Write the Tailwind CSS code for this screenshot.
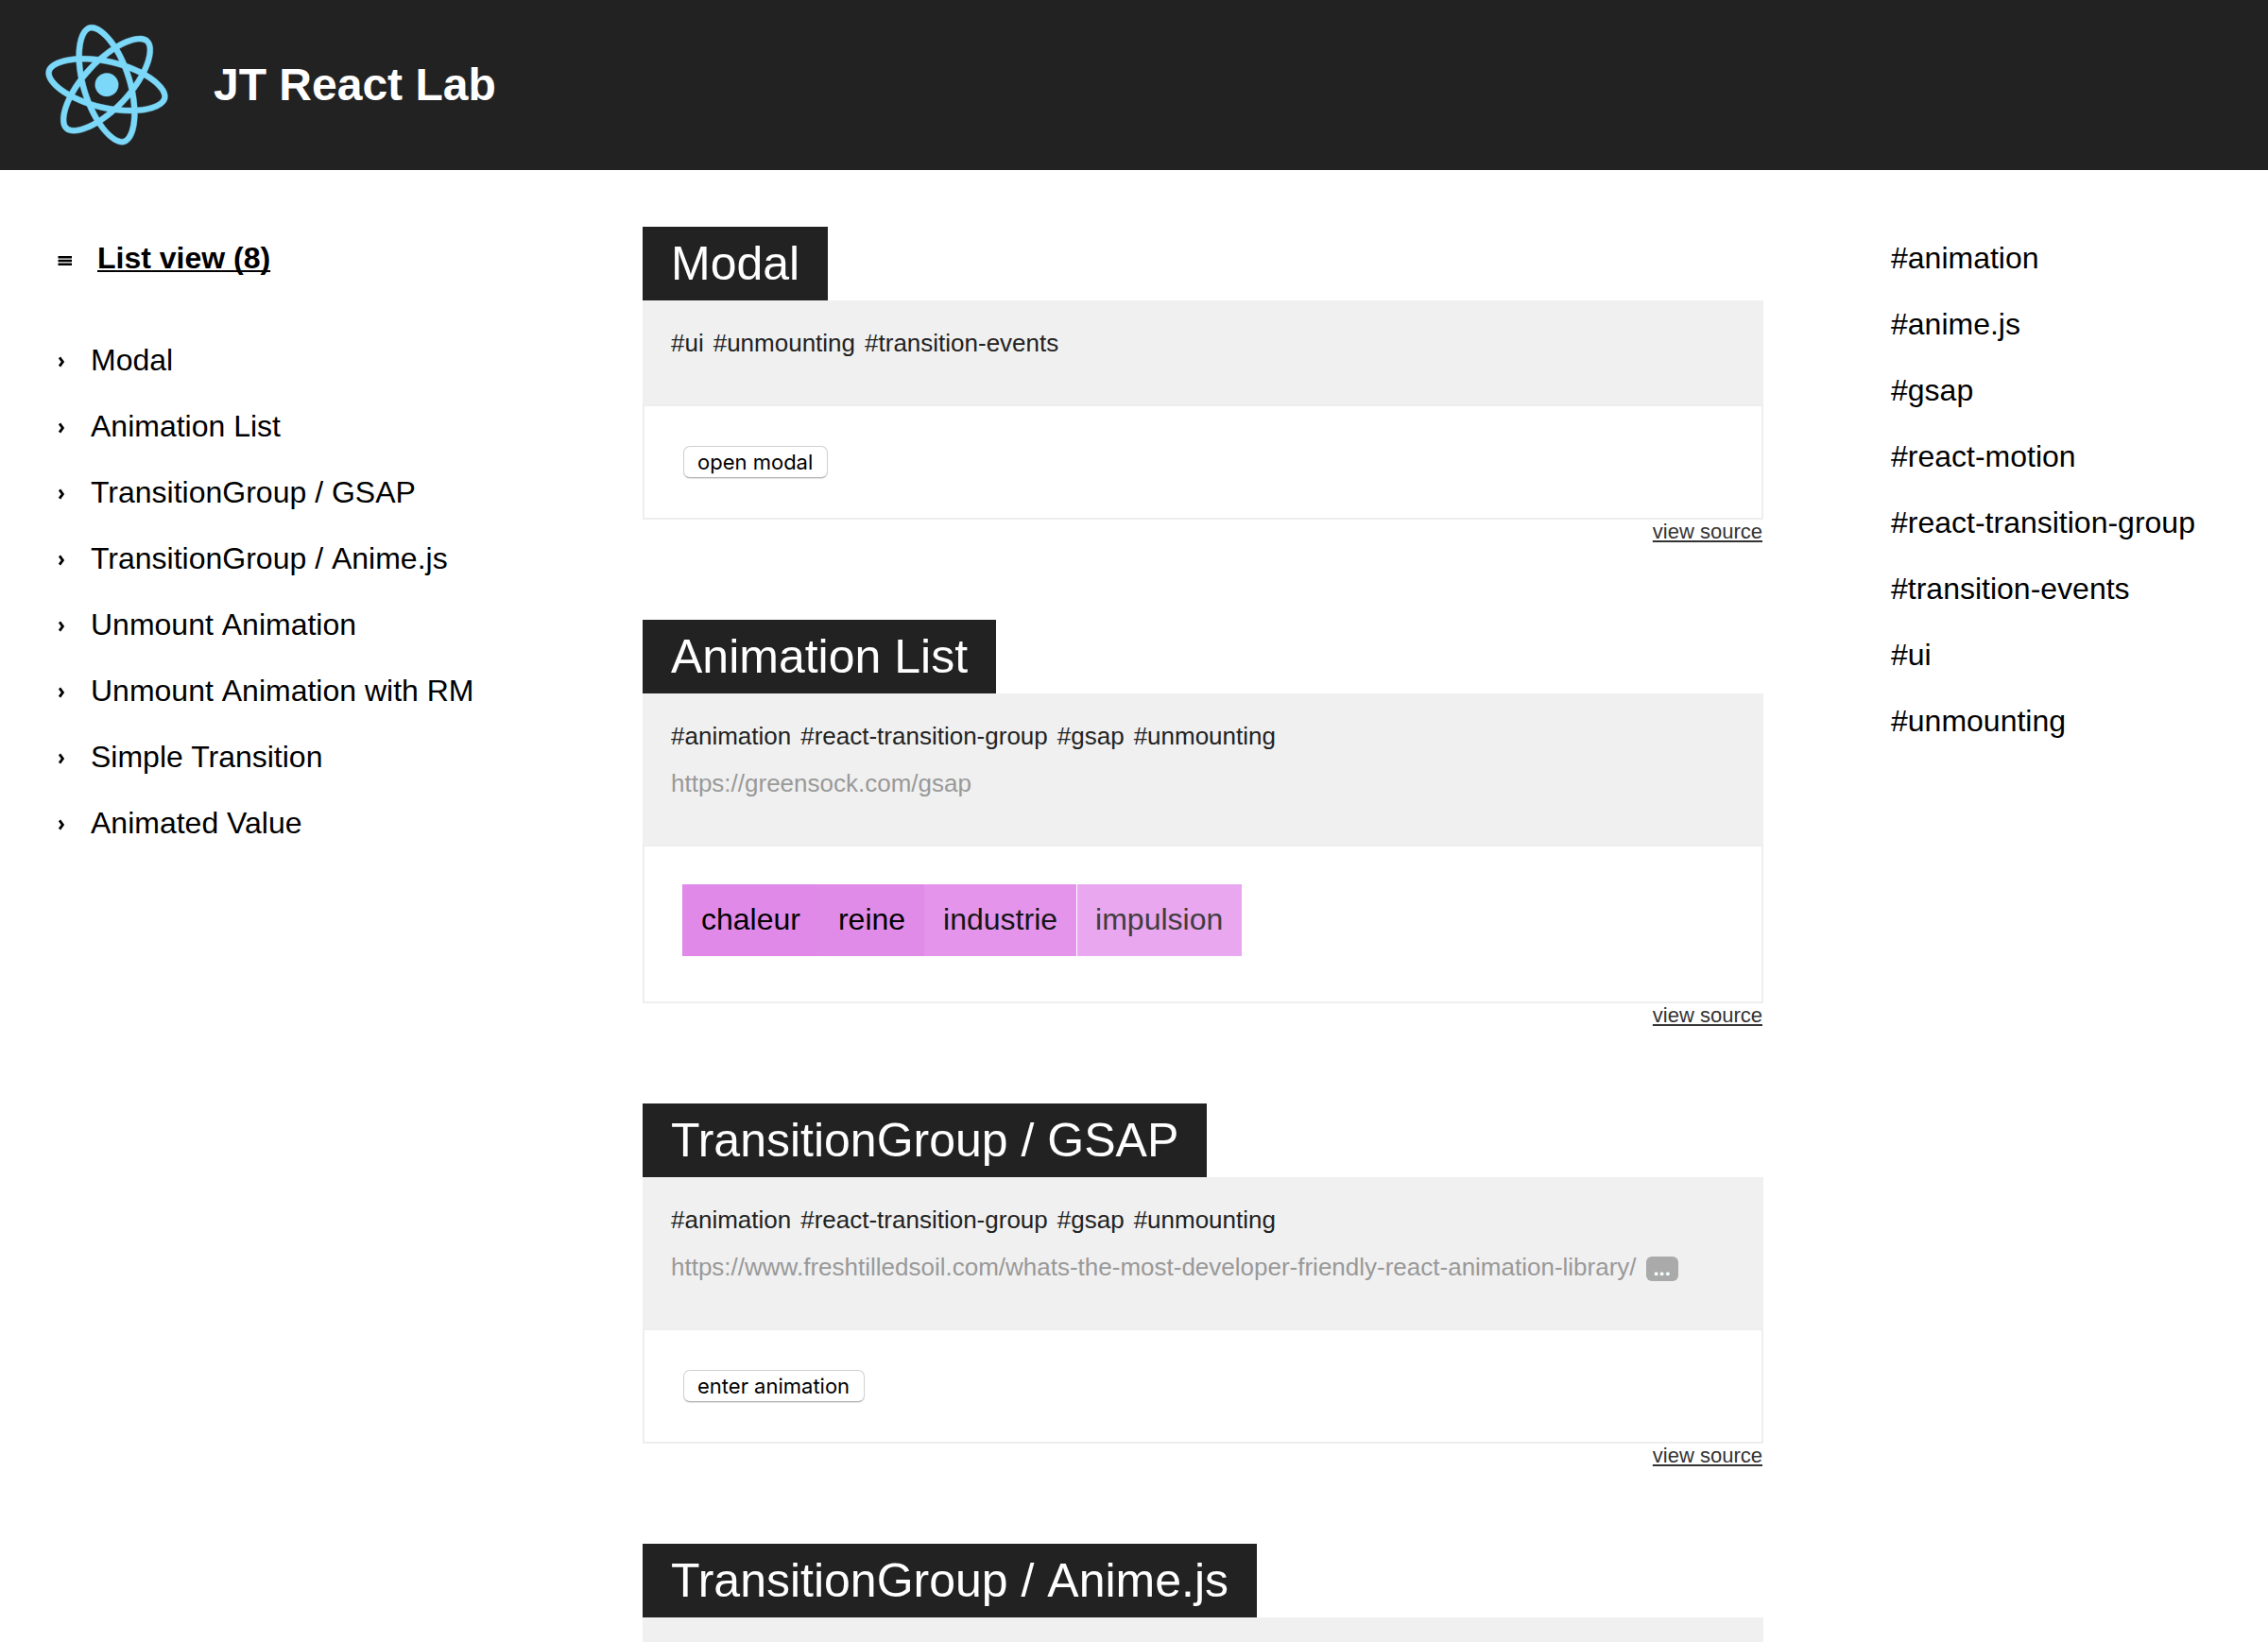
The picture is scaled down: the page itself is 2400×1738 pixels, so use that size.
<!DOCTYPE html>
<html lang="en">
<head>
<meta charset="utf-8">
<title>JT React Lab</title>
<script src="https://cdn.jsdelivr.net/npm/@tailwindcss/browser@4"></script>
</head>
<body class="bg-white text-black font-['Liberation_Sans',Arial,sans-serif] text-[32px] leading-[70px] h-[1738px] overflow-hidden">
<header class="h-[180px] bg-[#222] flex items-center">
  <svg class="w-[226px] h-[160px] shrink-0 text-[#7cd8f9]" viewBox="0 0 841.9 595.3" fill="currentColor" stroke="currentColor" stroke-width="1.6">
    <g transform="rotate(13 420.9 296.5)">
      <path d="M666.3 296.5c0-32.5-40.7-63.3-103.1-82.4 14.4-63.6 8-114.2-20.2-130.4-6.5-3.8-14.1-5.6-22.4-5.6v22.3c4.6 0 8.3.9 11.4 2.6 13.6 7.8 19.5 37.5 14.9 75.7-1.1 9.4-2.9 19.3-5.1 29.4-19.6-4.8-41-8.5-63.5-10.9-13.5-18.5-27.5-35.3-41.6-50 32.6-30.3 63.2-46.9 84-46.9V78c-27.5 0-63.5 19.6-99.9 53.6-36.4-33.8-72.4-53.2-99.9-53.2v22.3c20.7 0 51.4 16.5 84 46.6-14 14.7-28 31.4-41.3 49.9-22.6 2.4-44 6.1-63.6 11-2.3-10-4-19.7-5.2-29-4.7-38.2 1.1-67.9 14.6-75.8 3-1.8 6.9-2.6 11.5-2.6V78.5c-8.4 0-16 1.8-22.6 5.6-28.1 16.2-34.4 66.7-19.9 130.1-62.2 19.2-102.7 49.9-102.7 82.3 0 32.5 40.7 63.3 103.1 82.4-14.4 63.6-8 114.2 20.2 130.4 6.5 3.8 14.1 5.6 22.5 5.6 27.5 0 63.5-19.6 99.9-53.6 36.4 33.8 72.4 53.2 99.9 53.2 8.4 0 16-1.8 22.6-5.6 28.1-16.2 34.4-66.7 19.9-130.1 62-19.1 102.5-49.9 102.5-82.3zm-130.2-66.7c-3.7 12.9-8.3 26.2-13.5 39.5-4.1-8-8.4-16-13.1-24-4.6-8-9.5-15.8-14.4-23.4 14.2 2.1 27.9 4.7 41 7.9zm-45.8 106.5c-7.8 13.5-15.8 26.3-24.1 38.2-14.9 1.3-30 2-45.2 2-15.1 0-30.2-.7-45-1.9-8.3-11.9-16.4-24.6-24.2-38-7.6-13.1-14.5-26.4-20.8-39.8 6.2-13.4 13.2-26.8 20.7-39.9 7.8-13.5 15.8-26.3 24.1-38.2 14.9-1.3 30-2 45.2-2 15.1 0 30.2.7 45 1.9 8.3 11.9 16.4 24.6 24.2 38 7.6 13.1 14.5 26.4 20.8 39.8-6.3 13.4-13.2 26.8-20.7 39.9zm32.3-13c5.4 13.4 10 26.8 13.8 39.8-13.1 3.2-26.9 5.9-41.2 8 4.9-7.7 9.8-15.6 14.4-23.7 4.6-8 8.9-16.1 13-24.1zM421.2 430c-9.3-9.6-18.6-20.3-27.8-32 9 .4 18.2.7 27.5.7 9.4 0 18.7-.2 27.8-.7-9 11.7-18.3 22.4-27.5 32zm-74.4-58.9c-14.2-2.1-27.9-4.7-41-7.9 3.7-12.9 8.3-26.2 13.5-39.5 4.1 8 8.4 16 13.1 24 4.7 8 9.5 15.8 14.4 23.4zM420.7 163c9.3 9.6 18.6 20.3 27.8 32-9-.4-18.2-.7-27.5-.7-9.4 0-18.7.2-27.8.7 9-11.7 18.3-22.4 27.5-32zm-74 58.9c-4.9 7.7-9.8 15.6-14.4 23.7-4.6 8-8.9 16-13 24-5.4-13.4-10-26.8-13.8-39.8 13.1-3.1 26.9-5.8 41.2-7.9zm-90.5 125.2c-35.4-15.1-58.3-34.9-58.3-50.6 0-15.7 22.9-35.6 58.3-50.6 8.6-3.7 18-7 27.7-10.1 5.7 19.6 13.2 40 22.5 60.9-9.2 20.8-16.6 41.1-22.2 60.6-9.9-3.1-19.3-6.5-28-10.2zM310 490c-13.6-7.8-19.5-37.5-14.9-75.7 1.1-9.4 2.9-19.3 5.1-29.4 19.6 4.8 41 8.5 63.5 10.9 13.5 18.5 27.5 35.3 41.6 50-32.6 30.3-63.2 46.9-84 46.9-4.5-.1-8.3-1-11.3-2.7zm237.2-76.2c4.7 38.2-1.1 67.9-14.6 75.8-3 1.8-6.9 2.6-11.5 2.6-20.7 0-51.4-16.5-84-46.6 14-14.7 28-31.4 41.3-49.9 22.6-2.4 44-6.1 63.6-11 2.3 10.1 4.1 19.8 5.2 29.1zm38.5-66.7c-8.6 3.7-18 7-27.7 10.1-5.7-19.6-13.2-40-22.5-60.9 9.2-20.8 16.6-41.1 22.2-60.6 9.9 3.1 19.3 6.5 28.1 10.2 35.4 15.1 58.3 34.9 58.3 50.6-.1 15.7-23 35.6-58.4 50.6z"/>
      <circle cx="420.9" cy="296.5" r="45.7"/>
    </g>
  </svg>
  <h1 class="text-[48px] font-bold text-white leading-[56px]">JT React Lab</h1>
</header>
<div class="flex">
  <nav class="w-[680px] pl-[60px] pt-[58px] shrink-0">
    <div class="flex items-center h-[70px]">
      <svg class="w-[16px] h-[12px] mr-[27px] mt-[6px]" viewBox="0 0 16 12"><path d="M1.5 1h14.5v2.5H1.5zM1.5 4.8h14.5v2.5H1.5zM1.5 8.4h14.5v2.6H1.5z"/></svg>
      <a class="font-bold underline decoration-[2px] underline-offset-[2px] [text-decoration-skip-ink:none]">List view (8)</a>
    </div>
    <ul class="mt-[38px]" id="demos"></ul>
  </nav>
  <main class="w-[1186px] pt-[60px] shrink-0" id="cards"></main>
  <aside class="pl-[135px] pt-[58px]"><ul id="tags"></ul></aside>
</div>
<script>
const demos = ['Modal','Animation List','TransitionGroup / GSAP','TransitionGroup /&nbsp;Anime.js','Unmount&nbsp;Animation','Unmount&nbsp;Animation with RM','Simple Transition','Animated Value'];
document.getElementById('demos').innerHTML = demos.map(d => `
  <li class="flex items-center h-[70px]">
    <svg class="w-[10px] h-[14px] ml-[1px] mr-[25px] mt-[4px]" viewBox="0 0 10 14" fill="none" stroke="#000" stroke-width="2.8"><path d="M2 2.4L5.4 7L2 11.6"/></svg>
    <a>${d}</a>
  </li>`).join('');
const tags = ['animation','anime.js','gsap','react-motion','react-transition-group','transition-events','ui','unmounting'];
document.getElementById('tags').innerHTML = tags.map(t => `<li class="h-[70px]">#${t}</li>`).join('');

const button = label => `<button class="h-[34px] ml-[1px] pl-[14px] pr-[15px] rounded-[7px] border border-[#d0d0d0] border-b-[#b4b4b4] bg-white shadow-[0_1px_1px_rgba(0,0,0,0.12)] font-[Inter,sans-serif] text-[22px] leading-[33px] block">${label}</button>`;
const chips = `<div class="flex leading-[74px]">
  <span class="px-[20px] pb-[2px] bg-[#e089e8]">chaleur</span><span class="px-[20px] pb-[2px] bg-[#e18be8]">reine</span><span class="px-[20px] pb-[2px] bg-[#e494ea] text-[#151515]">industrie</span><span class="pl-[19px] pr-[20px] pb-[2px] bg-[#e8a7ee] text-[#403d40] border-l border-white">impulsion</span></div>`;
const cards = [
  {title:'Modal', tags:['ui','unmounting','transition-events'], body:button('open modal'), pad:'pt-[42px] pb-[42px]'},
  {title:'Animation List', tags:['animation','react-transition-group','gsap','unmounting'], link:'https://greensock.com/gsap', body:chips, pad:'pt-[40px] pb-[48px]'},
  {title:'TransitionGroup / GSAP', tags:['animation','react-transition-group','gsap','unmounting'], link:'https://www.freshtilledsoil.com/whats-the-most-developer-friendly-react-animation-library/', more:true, body:button('enter animation'), pad:'pt-[42px] pb-[42px]'},
  {title:'TransitionGroup /&nbsp;Anime.js'}
];
const heading = c => `<h2 class="inline-block align-top h-[78px] px-[30px] bg-[#222] text-white text-[50px] leading-[78px] whitespace-nowrap">${c.title}</h2>`;
document.getElementById('cards').innerHTML = cards.map(c => !c.tags ? `
  <article>${heading(c)}<div class="h-[26px] bg-[#f0f0f0]"></div></article>` : `
  <article class="mb-[56px]">
    ${heading(c)}
    <div class="bg-[#f0f0f0] px-[30px] pt-[20px] pb-[40px] text-[26px] leading-[50px]">
      <div class="flex gap-[10px] text-[#222]">${c.tags.map(t => `<span>#${t}</span>`).join('')}</div>
      ${c.link ? `<div class="flex items-center h-[50px] text-[#999]"><a>${c.link}</a>${c.more ? '<span class="ml-[10px] mt-[4px] w-[34px] h-[26px] rounded-[6px] bg-[#aaa] text-white text-center text-[22px] font-bold leading-[25px]">...</span>' : ''}</div>` : ''}
    </div>
    <div class="border-2 border-[#eee] px-[40px] ${c.pad}">${c.body}</div>
    <div class="h-[50px] pr-[1px] text-right text-[22px] leading-[25px] text-[#333]"><a class="underline decoration-[2px] underline-offset-[2px]">view source</a></div>
  </article>`).join('');
</script>
</body>
</html>
